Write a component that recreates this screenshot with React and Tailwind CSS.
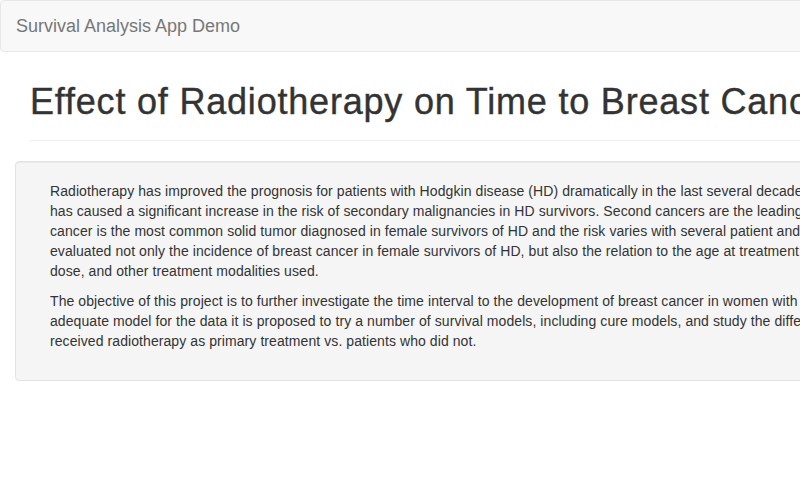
import React from 'react';

const INTRO = [
  'Radiotherapy has improved the prognosis for patients with Hodgkin disease (HD) dramatically in the last several decades, but it',
  'has caused a significant increase in the risk of secondary malignancies in HD survivors. Second cancers are the leading cause of',
  'cancer is the most common solid tumor diagnosed in female survivors of HD and the risk varies with several patient and treatment',
  'evaluated not only the incidence of breast cancer in female survivors of HD, but also the relation to the age at treatment, radiation',
  'dose, and other treatment modalities used.',
];

const OBJECTIVE = [
  'The objective of this project is to further investigate the time interval to the development of breast cancer in women with HD. To',
  'adequate model for the data it is proposed to try a number of survival models, including cure models, and study the difference',
  'received radiotherapy as primary treatment vs. patients who did not.',
];

function Lines({ lines }) {
  return (
    <p className="mb-[10px] whitespace-nowrap leading-5 tracking-[0.08px]">
      {lines.map((l, i) => (
        <React.Fragment key={i}>
          {l}
          {i < lines.length - 1 && <br />}
        </React.Fragment>
      ))}
    </p>
  );
}

export default function App() {
  return (
    <div className="w-[800px] h-[500px] overflow-hidden bg-white text-[14px] text-[#333] font-['Liberation_Sans',Arial,sans-serif]">
      <div className="w-[1200px]">
        <nav className="h-[52px] border border-[#e7e7e7] bg-[#f8f8f8] rounded-[4px] px-[15px] flex items-center">
          <span className="text-[18px] leading-5 text-[#777]">Survival Analysis App Demo</span>
        </nav>

        <div className="mx-[30px] mt-[30px] pb-[18px] border-b border-[#eee]">
          <h1 className="text-[36px] leading-[39.6px] whitespace-nowrap tracking-[0.8px] text-[#333] [-webkit-text-stroke:0.4px_#333]">
            Effect of Radiotherapy on Time to Breast Cancer in Hodgkin Disease Survivors
          </h1>
        </div>

        <div className="mx-[15px] mt-[20px] bg-[#f5f5f5] border border-[#e3e3e3] rounded-[4px] shadow-[inset_0_1px_1px_rgba(0,0,0,0.05)] py-[19px] pl-[34px] pr-[19px]">
          <Lines lines={INTRO} />
          <Lines lines={OBJECTIVE} />
        </div>
      </div>
    </div>
  );
}
